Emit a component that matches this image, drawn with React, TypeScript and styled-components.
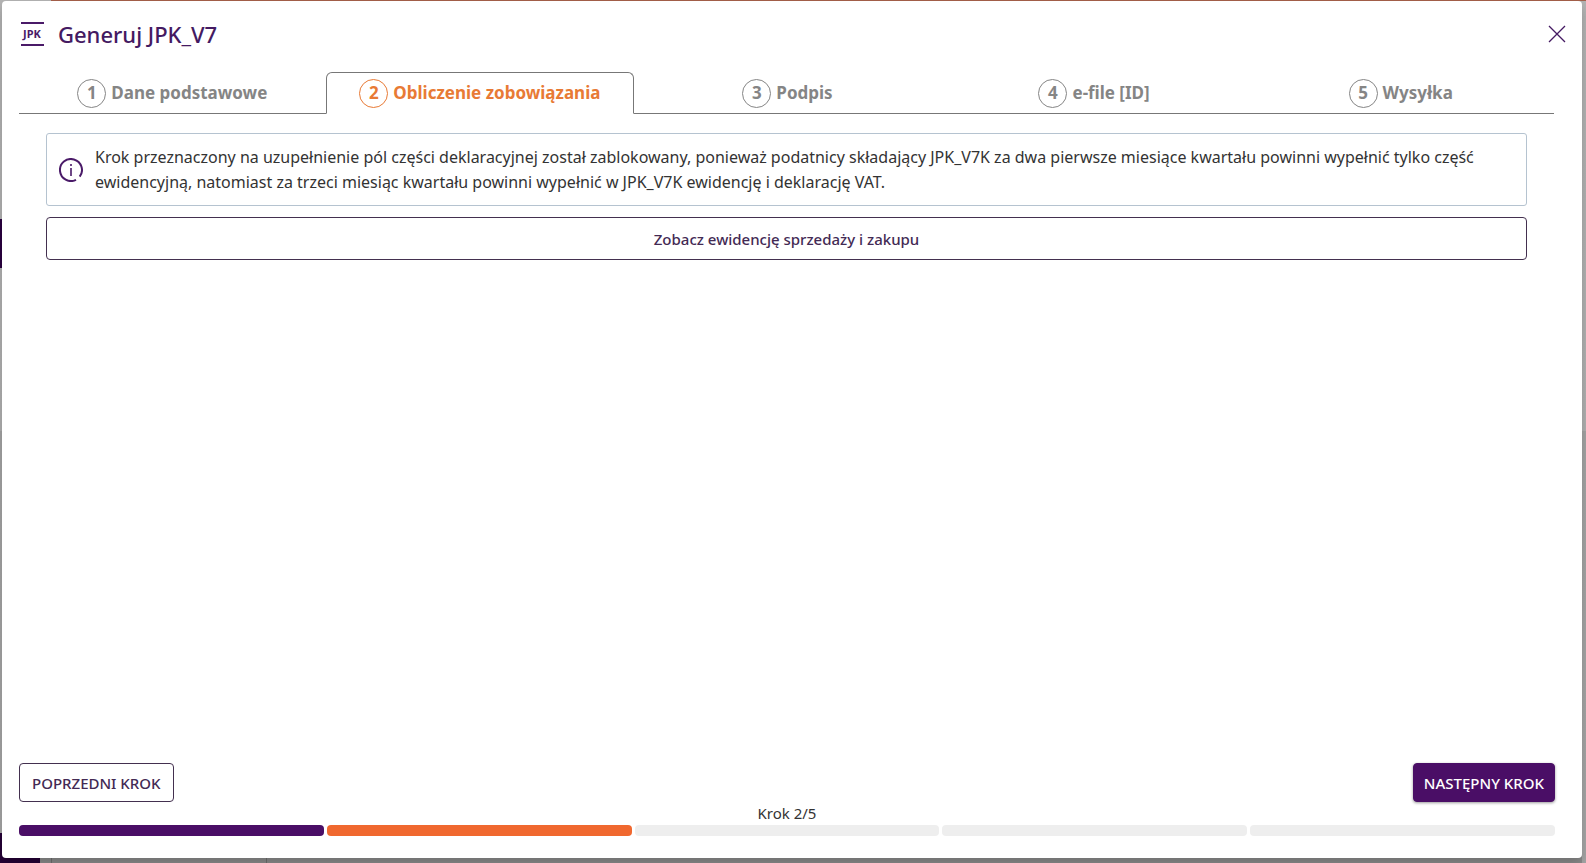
import React from "react";
import styled, { createGlobalStyle } from "styled-components";

const GlobalStyle = createGlobalStyle`
  * { box-sizing: border-box; }
  html, body { margin: 0; }
  body {
    font-family: "Noto Sans", "Open Sans", sans-serif;
    color: #333;
    background: #a8a8a8;
  }
  button { font-family: inherit; cursor: pointer; }
`;

const Page = styled.div`
  position: relative;
  min-height: 100vh;
  display: flex;
  padding: 1px 4px 5px 2px;
  background: linear-gradient(#b4b4b4 0, #b0b0b0 50%, #a4a4a4 50%, #a6a6a6 100%);
`;

const TopStripe = styled.div`
  position: absolute;
  top: 0;
  left: 51px;
  right: 0;
  height: 1px;
  background: #a5604a;
`;

const BottomStrip = styled.div`
  position: absolute;
  left: 0;
  right: 4px;
  bottom: 0;
  height: 30px;
  display: flex;
  background: #8c8c8c;
`;

const MenuCorner = styled.div`
  width: 40px;
  background: #250036;
`;

const SidePanel = styled.div`
  width: 216px;
  margin-left: 11px;
  border: 1px solid #707070;
  border-width: 0 1px;
`;

const MenuMark = styled.div`
  position: absolute;
  top: 219px;
  left: 0;
  width: 8px;
  height: 49px;
  background: #2a0040;
`;

const Dialog = styled.main`
  position: relative;
  flex: 1;
  display: flex;
  flex-direction: column;
  background: #fff;
  border-radius: 4px;
  padding: 0 27px 22px 17px;
  box-shadow: 0 6px 12px rgba(0, 0, 0, 0.2);
`;

const Header = styled.header`
  display: flex;
  align-items: center;
  height: 66px;
  margin-right: -15px;
`;

const Title = styled.h1`
  flex: 1;
  margin: 0 0 0 12px;
  font-size: 22px;
  line-height: 30px;
  font-weight: 500;
  color: #441a62;
`;

const CloseButton = styled.button`
  display: flex;
  padding: 4px;
  border: 0;
  background: none;
`;

const Tabs = styled.nav`
  display: flex;
  margin: 5px 1px 0 0;
`;

const Tab = styled.button<{ $active?: boolean }>`
  flex: 1 1 0;
  display: flex;
  align-items: center;
  justify-content: center;
  gap: 5px;
  height: 42px;
  padding: 0;
  background: none;
  border: 1px solid;
  border-color: ${(p) => (p.$active ? "#777 #777 transparent" : "transparent transparent #777")};
  border-width: ${(p) => (p.$active ? "1px" : "1px 0")};
  border-radius: ${(p) => (p.$active ? "6px 6px 0 0" : "0")};
  font-size: 17px;
  line-height: 24px;
  font-weight: 700;
  color: ${(p) => (p.$active ? "#e87a35" : "#858585")};
`;

const StepNumber = styled.span`
  display: flex;
  align-items: center;
  justify-content: center;
  width: 29px;
  height: 29px;
  border: 1px solid currentColor;
  border-radius: 50%;
`;

const Content = styled.section`
  flex: 1;
  display: flex;
  flex-direction: column;
  gap: 11px;
  padding: 19px 28px 19px 27px;
`;

const Notice = styled.div`
  display: flex;
  align-items: center;
  gap: 12px;
  min-height: 73px;
  padding: 10px 12px;
  border: 1px solid #b5c3d0;
  border-radius: 3px;
`;

const NoticeText = styled.p`
  flex: 1;
  margin: 0;
  font-size: 16px;
  line-height: 25px;
`;

const OutlineButton = styled.button<{ $wide?: boolean }>`
  height: ${(p) => (p.$wide ? "43px" : "39px")};
  padding: 0 12px;
  border: 1px solid #43304f;
  border-radius: 4px;
  background: #fff;
  color: #432a54;
  font-size: 15px;
  line-height: 20px;
  font-weight: 500;
`;

const PrimaryButton = styled(OutlineButton)`
  padding: 0 10px;
  border-color: #4a0e66;
  background: #4a0e66;
  color: #fff;
  box-shadow: 0 1px 3px rgba(0, 0, 0, 0.4);
`;

const Actions = styled.div`
  display: flex;
  justify-content: space-between;
`;

const ProgressLabel = styled.div`
  font-size: 15px;
  line-height: 23px;
  text-align: center;
`;

const Progress = styled.div`
  display: flex;
  gap: 3px;
`;

const Segment = styled.div<{ $color: string }>`
  flex: 1;
  height: 11px;
  border-radius: 4px;
  background: ${(p) => p.$color};
`;

const steps = ["Dane podstawowe", "Obliczenie zobowiązania", "Podpis", "e-file [ID]", "Wysyłka"];
const colors = ["#4a0e66", "#f0682f", "#eee", "#eee", "#eee"];

export default function App() {
  return (
    <Page>
      <GlobalStyle />
      <TopStripe />
      <MenuMark />
      <BottomStrip>
        <MenuCorner />
        <SidePanel />
      </BottomStrip>
      <Dialog>
        <Header>
          <svg width="27" height="26" viewBox="0 0 27 26" aria-hidden="true">
            <path d="M2 2H25M2 24H25" stroke="#4a1a68" strokeWidth="2" />
            <text x="13" y="17" textAnchor="middle" fontSize="11" fontWeight="700" fill="#4a1a68">JPK</text>
          </svg>
          <Title>Generuj JPK_V7</Title>
          <CloseButton aria-label="Zamknij">
            <svg width="18" height="18" viewBox="0 0 18 18" aria-hidden="true">
              <path d="M1 1L17 17M17 1L1 17" stroke="#441a62" strokeWidth="1.3" />
            </svg>
          </CloseButton>
        </Header>
        <Tabs>
          {steps.map((s, i) => (
            <Tab key={s} $active={i === 1}>
              <StepNumber>{i + 1}</StepNumber>
              {s}
            </Tab>
          ))}
        </Tabs>
        <Content>
          <Notice>
            <svg width="24" height="24" viewBox="0 0 24 24" fill="none" stroke="#4a1a68" strokeWidth="2" aria-hidden="true">
              <path d="M17 21.8A11 11 0 1 1 20.700 18.700" />
              <path d="M12 10V18M12 6V8" strokeWidth="1.600" />
            </svg>
            <NoticeText>
              Krok przeznaczony na uzupełnienie pól części deklaracyjnej został zablokowany, ponieważ podatnicy
              składający JPK_V7K za dwa pierwsze miesiące kwartału powinni wypełnić tylko część ewidencyjną, natomiast
              za trzeci miesiąc kwartału powinni wypełnić w JPK_V7K ewidencję i deklarację VAT.
            </NoticeText>
          </Notice>
          <OutlineButton $wide>Zobacz ewidencję sprzedaży i zakupu</OutlineButton>
        </Content>
        <Actions>
          <OutlineButton>POPRZEDNI KROK</OutlineButton>
          <PrimaryButton>NASTĘPNY KROK</PrimaryButton>
        </Actions>
        <ProgressLabel>Krok 2/5</ProgressLabel>
        <Progress>
          {colors.map((c, i) => (
            <Segment key={i} $color={c} />
          ))}
        </Progress>
      </Dialog>
    </Page>
  );
}
